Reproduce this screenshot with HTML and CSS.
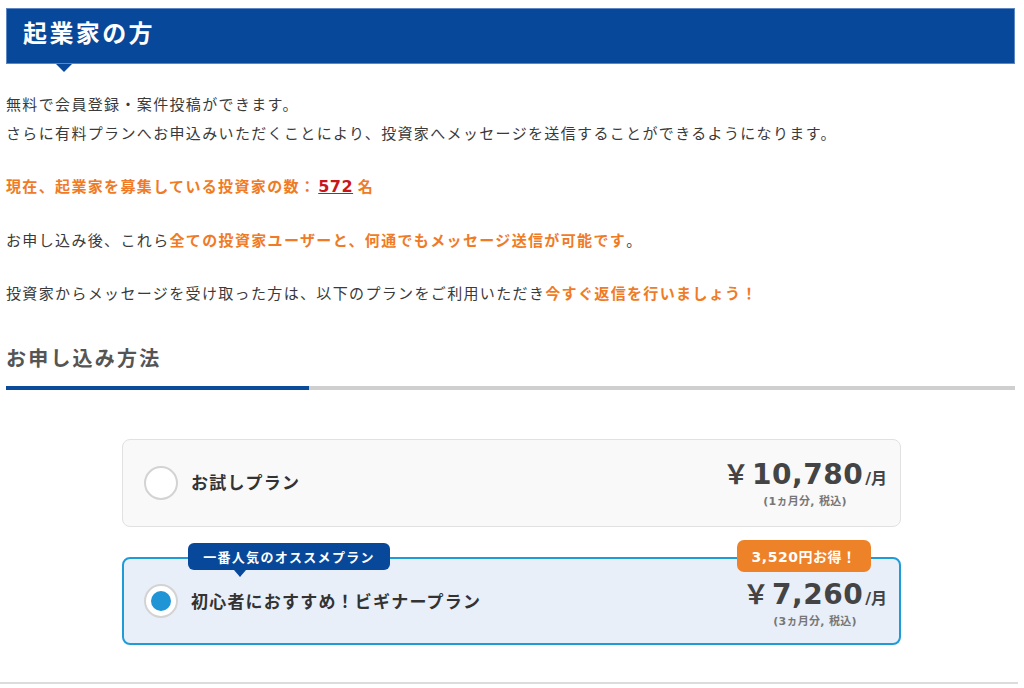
FILE: index.html
```html
<!DOCTYPE html>
<html lang="ja">
<head>
<meta charset="utf-8">
<link rel="stylesheet" href="styles.css">
</head>
<body>
<div class="page">
  <div class="title-bar"><h1 class="title">起業家の方</h1></div>
  <div class="intro">
    <p class="para">無料で会員登録・案件投稿ができます。<br>さらに有料プランへお申込みいただくことにより、投資家へメッセージを送信することができるようになります。</p>
    <p class="para strong-orange">現在、起業家を募集している投資家の数：<span class="count">572</span> 名</p>
    <p class="para">お申し込み後、これら<span class="strong-orange">全ての投資家ユーザーと、何通でもメッセージ送信が可能です</span>。</p>
    <p class="para">投資家からメッセージを受け取った方は、以下のプランをご利用いただき<span class="strong-orange">今すぐ返信を行いましょう！</span></p>
  </div>
  <h2 class="section-title">お申し込み方法</h2>
  <div class="section-rule"><div class="section-rule-accent"></div></div>
  <div class="plans">
    <div class="plan">
      <div class="plan-left">
        <span class="radio"></span>
        <span class="plan-name">お試しプラン</span>
      </div>
      <div class="plan-price">
        <div class="price"><span class="yen">￥</span><span class="amount">10,780</span><span class="per">/月</span></div>
        <div class="price-note">(1ヵ月分, 税込)</div>
      </div>
    </div>
    <div class="plan plan-selected">
      <div class="badge-popular">一番人気のオススメプラン</div>
      <div class="badge-save">3,520円お得！</div>
      <div class="plan-left">
        <span class="radio radio-on"></span>
        <span class="plan-name">初心者におすすめ！ビギナープラン</span>
      </div>
      <div class="plan-price">
        <div class="price"><span class="yen">￥</span><span class="amount">7,260</span><span class="per">/月</span></div>
        <div class="price-note">(3ヵ月分, 税込)</div>
      </div>
    </div>
  </div>
  <div class="bottom-rule"></div>
</div>
</body>
</html>
```

FILE: styles.css
```css
* { box-sizing: border-box; }
html, body { margin: 0; padding: 0; background: #fff; }
body {
  font-family: "DejaVu Sans", "Noto Sans CJK JP", sans-serif;
  color: #3a3a3a;
}
.page {
  width: 1024px;
  padding-top: 8px;
}
.title-bar {
  position: relative;
  margin-left: 6px;
  width: 1009px;
  height: 56px;
  background: #07489a;
  border: 1px solid #5c86c4;
  display: flex;
  align-items: center;
  padding: 0 0 8px 16px;
}
.title-bar::after {
  content: "";
  position: absolute;
  left: 49px;
  bottom: -9px;
  border-left: 8px solid transparent;
  border-right: 8px solid transparent;
  border-top: 8px solid #07489a;
}
.title {
  margin: 0;
  color: #fff;
  font-family: "Noto Sans CJK JP", sans-serif;
  font-size: 24px;
  font-weight: 700;
  letter-spacing: 2.4px;
  line-height: 1;
}
.intro {
  margin: 25px 0 0 6px;
}
.para {
  margin: 0 0 24px 0;
  font-family: "Noto Sans CJK JP", sans-serif;
  font-size: 15px;
  line-height: 29px;
  letter-spacing: 1.35px;
  color: #3a3a3a;
}
.strong-orange {
  color: #f07b26;
  font-weight: 700;
}
.count {
  font-family: "DejaVu Sans", sans-serif;
  font-size: 16px;
  color: #c8161d;
  text-decoration: underline;
  font-weight: 700;
  letter-spacing: 0.5px;
  margin-left: 2px;
}
.section-title {
  margin: 36px 0 0 6px;
  font-family: "Noto Sans CJK JP", sans-serif;
  font-size: 20px;
  font-weight: 700;
  letter-spacing: 2.2px;
  color: #555;
  line-height: 30px;
}
.section-rule {
  margin: 13px 0 0 6px;
  width: 1009px;
  height: 4px;
  background: #cfcfcf;
}
.section-rule-accent {
  width: 303px;
  height: 4px;
  background: #0c4b9c;
}
.plans {
  width: 779px;
  margin: 49px 0 0 122px;
  display: flex;
  flex-direction: column;
  gap: 30px;
}
.plan {
  position: relative;
  height: 88px;
  background: #f9f9f9;
  border: 1px solid #e1e1e1;
  border-radius: 8px;
  display: flex;
  align-items: center;
  justify-content: space-between;
  padding: 0 13px 0 21px;
}
.plan-selected {
  height: 88px;
  background: #e8eff8;
  border: 2px solid #1f9bd8;
  padding: 0 12px 0 20px;
}
.plan-left {
  display: flex;
  align-items: center;
  gap: 13px;
}
.radio {
  width: 34px;
  height: 34px;
  border-radius: 50%;
  background: #fff;
  border: 2px solid #d3d3d3;
  display: flex;
  align-items: center;
  justify-content: center;
}
.radio-on::after {
  content: "";
  width: 20px;
  height: 20px;
  border-radius: 50%;
  background: #1f95d6;
}
.plan-name {
  font-family: "Noto Sans CJK JP", sans-serif;
  font-size: 17px;
  font-weight: 700;
  letter-spacing: 1.2px;
  color: #333;
  margin-top: -3px;
}
.plan-selected .plan-name { margin-top: -2px; }
.plan-price {
  display: flex;
  flex-direction: column;
  align-items: center;
  margin-top: -1px;
}
.plan-selected .plan-price { margin-top: 3px; }
.price {
  display: flex;
  align-items: baseline;
  color: #444;
  line-height: 34px;
}
.yen {
  font-family: "Noto Sans CJK JP", sans-serif;
  font-size: 26px;
  font-weight: 700;
  margin-right: 3px;
}
.amount {
  font-family: "DejaVu Sans", sans-serif;
  font-size: 28px;
  font-weight: 700;
  letter-spacing: 0.5px;
}
.per {
  font-family: "DejaVu Sans", "Noto Sans CJK JP", sans-serif;
  font-size: 16px;
  font-weight: 700;
  margin-left: 2px;
}
.price-note {
  font-family: "DejaVu Sans", "Noto Sans CJK JP", sans-serif;
  font-size: 11px;
  font-weight: 700;
  color: #777;
  line-height: 14px;
  margin-top: -1px;
  letter-spacing: 0.3px;
}
.badge-popular {
  position: absolute;
  left: 64px;
  top: -16px;
  width: 202px;
  height: 27px;
  background: #07489a;
  border-radius: 6px;
  color: #fff;
  font-family: "Noto Sans CJK JP", sans-serif;
  font-size: 13px;
  font-weight: 700;
  letter-spacing: 1.3px;
  display: flex;
  align-items: center;
  justify-content: center;
}
.badge-popular::after {
  content: "";
  position: absolute;
  left: 46px;
  bottom: -7px;
  border-left: 6px solid transparent;
  border-right: 6px solid transparent;
  border-top: 7px solid #07489a;
}
.badge-save {
  position: absolute;
  right: 28px;
  top: -19px;
  width: 134px;
  height: 32px;
  background: #ee8229;
  border-radius: 7px;
  color: #fff;
  font-family: "DejaVu Sans", "Noto Sans CJK JP", sans-serif;
  font-size: 14px;
  font-weight: 700;
  letter-spacing: 0.5px;
  display: flex;
  align-items: center;
  justify-content: center;
}
.bottom-rule {
  margin-top: 37px;
  width: 1018px;
  height: 2px;
  background: #dcdcdc;
}
```
